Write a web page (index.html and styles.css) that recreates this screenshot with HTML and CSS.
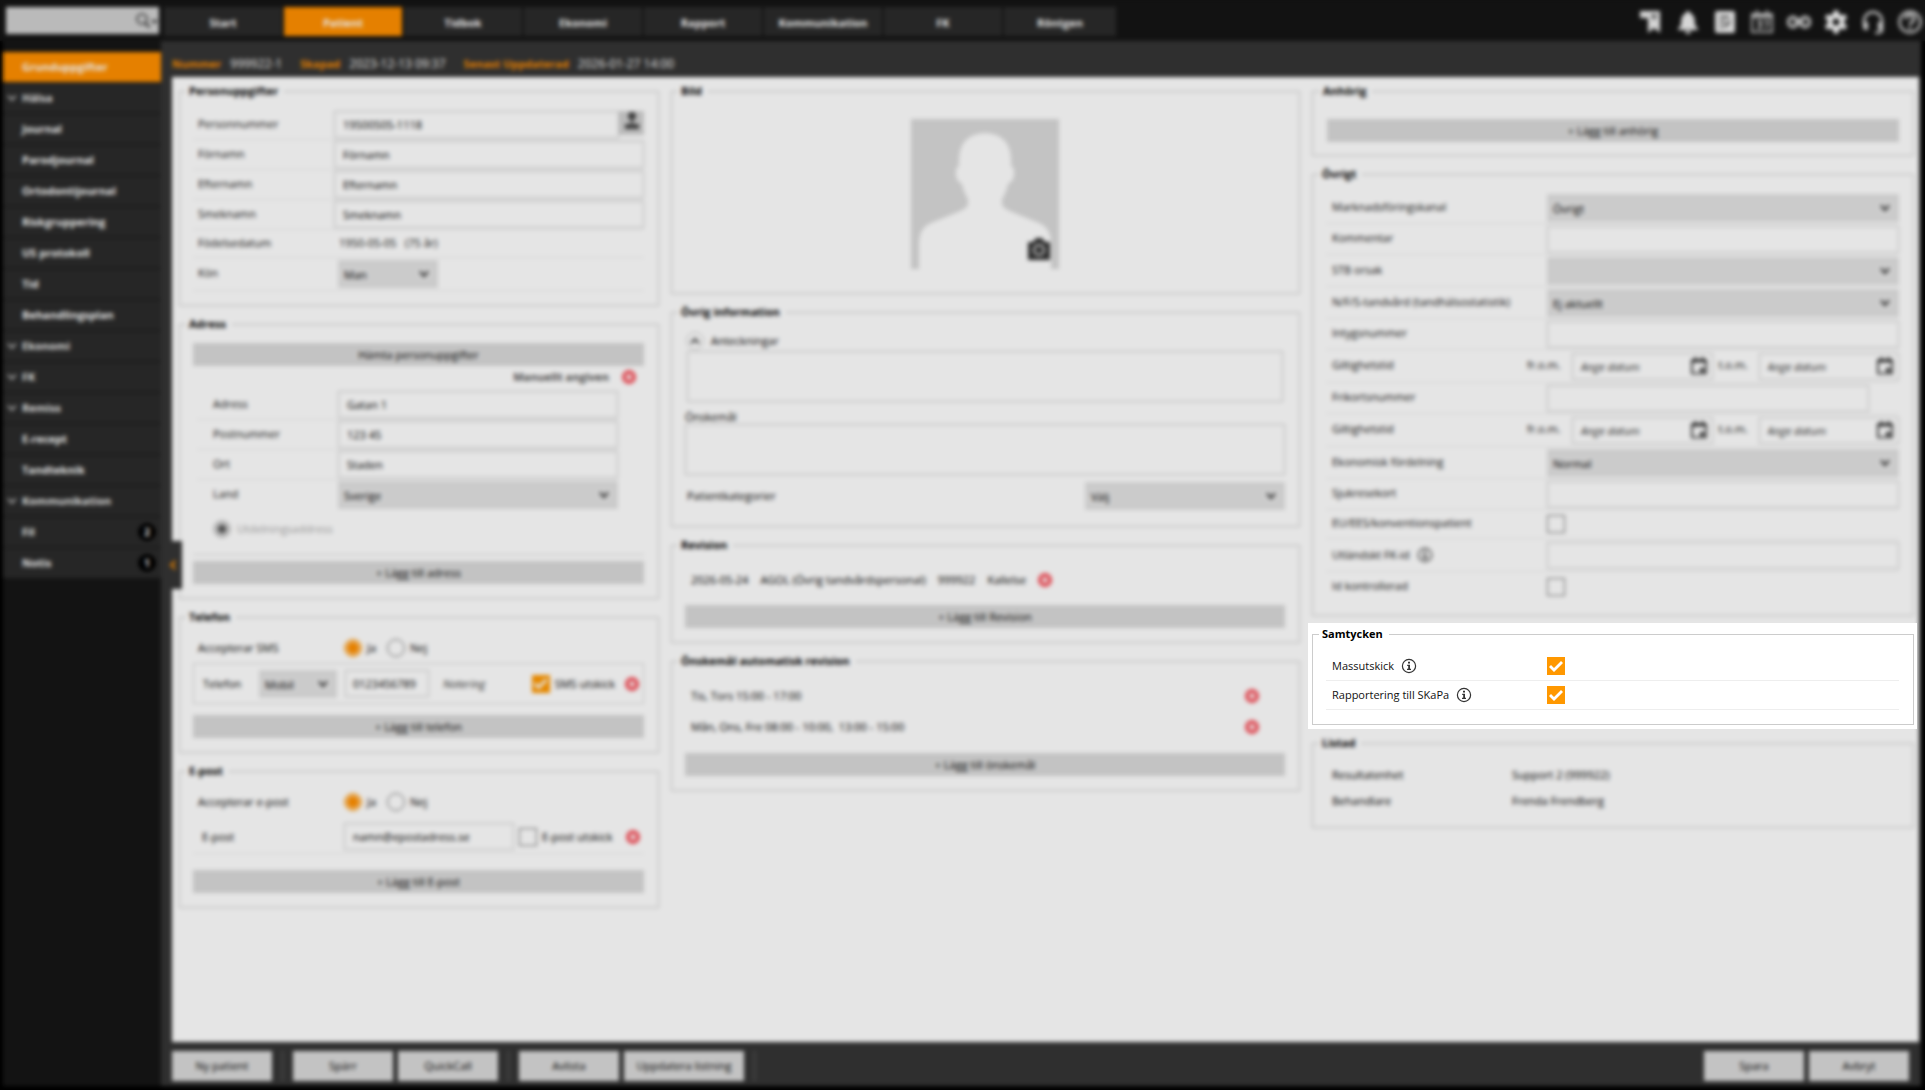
FILE: index.html
```html
<!DOCTYPE html>
<html lang="sv">
<head>
<meta charset="utf-8">
<title>Patient – Grunduppgifter</title>
<link rel="stylesheet" href="styles.css">
</head>
<body>
<svg class="defs" aria-hidden="true">
  <symbol id="chev" viewBox="0 0 10 8"><path d="M1 1.5 5 6 9 1.5" fill="none" stroke="currentColor" stroke-width="2"/></symbol>
  <symbol id="remove" viewBox="0 0 14 14"><circle cx="7" cy="7" r="7" fill="#f8525c"/><path d="M4.500 4.500 9.500 9.500M9.500 4.500 4.500 9.500" stroke="#fff" stroke-width="2.200"/></symbol>
  <symbol id="info" viewBox="0 0 16 16"><circle cx="8" cy="8" r="6.600" fill="none" stroke="#333" stroke-width="1.200"/><path d="M7 3.800h2v1.700H7zM6.200 6.800H9v4h1v1.200H6v-1.200h1.200V8h-1z" fill="#333"/></symbol>
  <symbol id="cal" viewBox="0 0 16 18"><path d="M1 3h14v13.500H1zM1 4.500h14M4.500 0v4M11.500 0v4" fill="none" stroke="#222" stroke-width="1.700"/><path d="M9 11h4v4H9z" fill="#222"/></symbol>
</svg>

<header class="topbar">
  <div class="search">
    <input type="search" aria-label="Sök patient">
    <svg width="24" height="16" viewBox="0 0 24 16"><circle cx="7" cy="6" r="5" fill="none" stroke="#333" stroke-width="1.500"/><path d="m10.500 10 4 4.500" stroke="#333" stroke-width="2"/><path d="M16 7h7l-3.500 4z" fill="#333"/></svg>
  </div>
  <nav class="tabs" aria-label="Moduler">
    <a href="#">Start</a><a href="#" class="active">Patient</a><a href="#">Tidbok</a><a href="#">Ekonomi</a><a href="#">Rapport</a><a href="#">Kommunikation</a><a href="#">FK</a><a href="#" class="narrow">Röntgen</a>
  </nav>
  <div class="tools">
    <button type="button" aria-label="Bokmärken"><svg viewBox="0 0 24 24"><path d="M1 1h20v22l-6-5-6 5V8H1z" fill="#eee"/><path d="M12 6h6M15 4v6" stroke="#555" stroke-width="2"/></svg></button>
    <button type="button" aria-label="Aviseringar"><svg viewBox="0 0 24 24"><path d="M12 1c2 0 2 2 2 2 4 2 5 5 5 12l3 4v1H2v-1l3-4C5 8 6 5 10 3c0 0 0-2 2-2zM9 21h6c0 4-6 4-6 0z" fill="#eee"/></svg></button>
    <button type="button" aria-label="Anteckning"><svg viewBox="0 0 24 24"><rect x="2" y="1" width="20" height="22" rx="2" fill="#eee"/><path d="M7 7h9M7 12h5M7 17h3M12 17l5-6" stroke="#444" stroke-width="2"/></svg></button>
    <button type="button" aria-label="Kalender"><svg viewBox="0 0 24 24"><path d="M2 4h20v18H2zM7 0v5M17 0v5" fill="none" stroke="#bbb" stroke-width="2"/><path d="M2 3h20v5H2z" fill="#bbb"/><path d="M7 11h4v3H8h3v4H7M14 11h4l-2 8" fill="none" stroke="#bbb" stroke-width="2"/></svg></button>
    <button type="button" aria-label="Länkar"><svg viewBox="0 0 28 24"><circle cx="7" cy="12" r="5.500" fill="none" stroke="#ccc" stroke-width="4"/><circle cx="21" cy="12" r="5.500" fill="none" stroke="#ccc" stroke-width="4"/><path d="M8 12h12" stroke="#ccc" stroke-width="3"/></svg></button>
    <button type="button" aria-label="Inställningar"><svg viewBox="0 0 24 24"><path d="M12 4.500v-4M12 19.500v4M5.500 8.200 2 6.200M18.500 15.800l3.500 2M5.500 15.800 2 17.800M18.500 8.200l3.500-2" stroke="#fff" stroke-width="5"/><circle cx="12" cy="12" r="6" fill="none" stroke="#fff" stroke-width="5"/></svg></button>
    <button type="button" aria-label="Support"><svg viewBox="0 0 24 24"><path d="M3 14v-3a9 9 0 0 1 18 0v9q0 3-7 3" fill="none" stroke="#ddd" stroke-width="2.500"/><path d="M2 12h5v8H5q-3 0-3-3zM17 12h5v8h-5z" fill="#ddd"/></svg></button>
    <button type="button" aria-label="Hjälp"><svg viewBox="0 0 24 24"><circle cx="12" cy="12" r="10.500" fill="none" stroke="#ccc" stroke-width="2.500"/><path d="M8 9q0-4 4-4t4 4q0 2-4 5v1M12 17v3" fill="none" stroke="#ccc" stroke-width="3"/></svg></button>
  </div>
</header>

<div class="shell">
  <nav class="sidebar" aria-label="Patientmeny">
    <a href="#" class="active">Grunduppgifter</a>
    <a href="#" class="group"><svg><use href="#chev"/></svg>Hälsa</a>
    <a href="#">Journal</a>
    <a href="#">Parodjournal</a>
    <a href="#">Ortodontijournal</a>
    <a href="#">Riskgruppering</a>
    <a href="#">US protokoll</a>
    <a href="#">Tid</a>
    <a href="#">Behandlingsplan</a>
    <a href="#" class="group"><svg><use href="#chev"/></svg>Ekonomi</a>
    <a href="#" class="group"><svg><use href="#chev"/></svg>FK</a>
    <a href="#" class="group"><svg><use href="#chev"/></svg>Remiss</a>
    <a href="#">E-recept</a>
    <a href="#">Tandteknik</a>
    <a href="#" class="group"><svg><use href="#chev"/></svg>Kommunikation</a>
    <a href="#">Fil <span class="count">2</span></a>
    <a href="#">Notis <span class="count">1</span></a>
  </nav>

  <div class="workspace">
    <div class="infobar"><b>Nummer</b><span>999922-1</span><b>Skapad</b><span>2023-12-13 09:37</span><b>Senast Uppdaterad</b><span>2026-01-27 14:00</span></div>

    <main class="panel">
      <button type="button" class="handle" aria-label="Fäll in menyn"><svg><use href="#chev"/></svg></button>

      <div class="column">
        <fieldset>
          <legend>Personuppgifter</legend>
          <div class="rows person">
            <div class="row"><label for="pnr">Personnummer</label><div class="join"><input id="pnr" type="text" value="19500505-1118"><button type="button" class="lookup" aria-label="Hämta person"><svg width="20" height="20" viewBox="0 0 20 20"><circle cx="10" cy="5" r="4" fill="#444"/><path d="M9 8h2v5h6v5H3v-5h6z" fill="#444"/></svg></button></div></div>
            <div class="row"><label for="fn">Förnamn</label><input id="fn" type="text" value="Förnamn"></div>
            <div class="row"><label for="en">Efternamn</label><input id="en" type="text" value="Efternamn"></div>
            <div class="row"><label for="sn">Smeknamn</label><input id="sn" type="text" value="Smeknamn"></div>
            <div class="row birth"><span>Födelsedatum</span><span class="indent">1950-05-05 &nbsp; (75 år)</span></div>
            <div class="row gender"><label for="kon">Kön</label><div class="select"><select id="kon"><option>Man</option></select><svg><use href="#chev"/></svg></div></div>
          </div>
        </fieldset>

        <fieldset>
          <legend>Adress</legend>
          <button type="button" class="wide">Hämta personuppgifter</button>
          <div class="manual"><b>Manuellt angiven</b><button type="button" class="remove" aria-label="Ta bort adress"><svg><use href="#remove"/></svg></button></div>
          <div class="rows address">
            <div class="row"><label for="adr">Adress</label><input id="adr" type="text" value="Gatan 1"></div>
            <div class="row"><label for="post">Postnummer</label><input id="post" type="text" value="123 45"></div>
            <div class="row"><label for="ort">Ort</label><input id="ort" type="text" value="Staden"></div>
            <div class="row"><label for="land">Land</label><div class="select"><select id="land"><option>Sverige</option></select><svg><use href="#chev"/></svg></div></div>
          </div>
          <label class="delivery"><input type="radio" name="delivery" checked disabled>Utdelningsaddress</label>
          <button type="button" class="wide">+ Lägg till adress</button>
        </fieldset>

        <fieldset>
          <legend>Telefon</legend>
          <div class="accept"><span>Accepterar SMS</span><label><input type="radio" name="sms" checked>Ja</label><label><input type="radio" name="sms">Nej</label></div>
          <div class="phone">
            <label for="tel">Telefon</label>
            <div class="select"><select aria-label="Telefontyp"><option>Mobil</option></select><svg><use href="#chev"/></svg></div>
            <input id="tel" type="tel" value="0123456789">
            <input class="note" type="text" placeholder="Notering" aria-label="Notering">
            <label class="tick"><input type="checkbox" checked>SMS utskick</label>
            <button type="button" class="remove" aria-label="Ta bort telefon"><svg><use href="#remove"/></svg></button>
          </div>
          <button type="button" class="wide">+ Lägg till telefon</button>
        </fieldset>

        <fieldset>
          <legend>E-post</legend>
          <div class="accept"><span>Accepterar e-post</span><label><input type="radio" name="mail" checked>Ja</label><label><input type="radio" name="mail">Nej</label></div>
          <div class="mail">
            <label for="epost">E-post</label>
            <input id="epost" type="email" value="namn@epostadress.se">
            <label class="tick"><input type="checkbox">E-post utskick</label>
            <button type="button" class="remove" aria-label="Ta bort e-post"><svg><use href="#remove"/></svg></button>
          </div>
          <button type="button" class="wide">+ Lägg till E-post</button>
        </fieldset>
      </div>

      <div class="column">
        <fieldset>
          <legend>Bild</legend>
          <div class="photo">
            <svg width="148" height="150" viewBox="0 0 148 150"><path d="M0 0h148v150H0z" fill="#dadada"/><path d="M8 150v-25q0-16 12-21l27-11q10-4 10-8V80q-4-6-6-15-7-4-6-12 0-5 3-6-2-32 26-33 28 1 26 33 3 1 3 6 1 8-6 12-2 9-6 15v5q0 4 10 8l27 11q12 5 12 21v25z" fill="#fff"/></svg>
            <button type="button" class="camera" aria-label="Ta bild"><svg width="22" height="22" viewBox="0 0 22 22"><path d="M0 4h5l3-4h6l3 4h5v18H0z" fill="#333"/><circle cx="11" cy="12" r="5" fill="none" stroke="#ddd" stroke-width="2"/></svg></button>
          </div>
        </fieldset>

        <fieldset>
          <legend>Övrig information</legend>
          <div class="notes-head"><button type="button" aria-label="Fäll ihop"><svg><use href="#chev"/></svg></button><label for="ant">Anteckningar</label></div>
          <textarea id="ant" class="inset"></textarea>
          <label class="above" for="onsk">Önskemål</label>
          <textarea id="onsk"></textarea>
          <div class="category"><label for="kat">Patientkategorier</label><div class="select"><select id="kat"><option>Välj</option></select><svg><use href="#chev"/></svg></div></div>
        </fieldset>

        <fieldset>
          <legend>Revision</legend>
          <div class="entry first"><span>2026-05-24</span><span>AGOL (Övrig tandvårdspersonal)</span><span>999922</span><span>Kallelse</span><button type="button" class="remove" aria-label="Ta bort revision"><svg><use href="#remove"/></svg></button></div>
          <button type="button" class="wide">+ Lägg till Revision</button>
        </fieldset>

        <fieldset>
          <legend>Önskemål automatisk revision</legend>
          <div class="entry spread"><span>Tis, Tors 15:00 - 17:00</span><button type="button" class="remove" aria-label="Ta bort önskemål"><svg><use href="#remove"/></svg></button></div>
          <div class="entry spread"><span>Mån, Ons, Fre 08:00 - 10:00, &nbsp;13:00 - 15:00</span><button type="button" class="remove" aria-label="Ta bort önskemål"><svg><use href="#remove"/></svg></button></div>
          <button type="button" class="wide">+ Lägg till önskemål</button>
        </fieldset>
      </div>

      <div class="column">
        <fieldset class="relative-box">
          <legend>Anhörig</legend>
          <button type="button" class="wide">+ Lägg till anhörig</button>
        </fieldset>

        <fieldset class="other-box">
          <legend>Övrigt</legend>
          <div class="rows other">
            <div class="row pick"><label for="kanal">Marknadsföringskanal</label><div class="select"><select id="kanal"><option>Övrigt</option></select><svg><use href="#chev"/></svg></div></div>
            <div class="row"><label for="komm">Kommentar</label><input id="komm" type="text"></div>
            <div class="row pick"><label for="stb">STB orsak</label><div class="select"><select id="stb"><option></option></select><svg><use href="#chev"/></svg></div></div>
            <div class="row pick"><label for="nfs">N/F/S-tandvård (tandhälsostatistik)</label><div class="select"><select id="nfs"><option>Ej aktuellt</option></select><svg><use href="#chev"/></svg></div></div>
            <div class="row"><label for="intyg">Intygsnummer</label><input id="intyg" type="text"></div>
            <div class="row dates"><span>Giltighetstid</span><label for="d1">fr.o.m.</label><div class="date"><input id="d1" type="text" placeholder="Ange datum"><svg><use href="#cal"/></svg></div><label for="d2">t.o.m.</label><div class="date"><input id="d2" type="text" placeholder="Ange datum"><svg><use href="#cal"/></svg></div></div>
            <div class="row short"><label for="fri">Frikortsnummer</label><input id="fri" type="text"></div>
            <div class="row dates"><span>Giltighetstid</span><label for="d3">fr.o.m.</label><div class="date"><input id="d3" type="text" placeholder="Ange datum"><svg><use href="#cal"/></svg></div><label for="d4">t.o.m.</label><div class="date"><input id="d4" type="text" placeholder="Ange datum"><svg><use href="#cal"/></svg></div></div>
            <div class="row pick"><label for="eko">Ekonomisk fördelning</label><div class="select"><select id="eko"><option>Normal</option></select><svg><use href="#chev"/></svg></div></div>
            <div class="row"><label for="sjuk">Sjukresekort</label><input id="sjuk" type="text"></div>
            <div class="row check"><label for="eu">EU/EES/konventionspatient</label><input id="eu" type="checkbox"></div>
            <div class="row foreign"><label for="fkid">Utländskt FK-id <svg><use href="#info"/></svg></label><input id="fkid" type="text"></div>
            <div class="row check"><label for="idk">Id kontrollerad</label><input id="idk" type="checkbox"></div>
          </div>
        </fieldset>

        <div class="spotlight">
          <fieldset>
            <legend>Samtycken</legend>
            <div class="rows consent">
              <div class="row"><label for="mass">Massutskick <svg><use href="#info"/></svg></label><input id="mass" type="checkbox" checked></div>
              <div class="row"><label for="skapa">Rapportering till SKaPa <svg><use href="#info"/></svg></label><input id="skapa" type="checkbox" checked></div>
            </div>
          </fieldset>
        </div>

        <fieldset>
          <legend>Listad</legend>
          <dl class="listed"><dt>Resultatenhet</dt><dd>Support 2 (999922)</dd><dt>Behandlare</dt><dd>Frenda Frendberg</dd></dl>
        </fieldset>
      </div>
    </main>

    <footer class="actions">
      <button type="button">Ny patient</button><i></i>
      <button type="button">Spärr</button><button type="button">QuickCall</button><i></i>
      <button type="button">Avlista</button><button type="button" class="long">Uppdatera listning</button><i></i>
      <div class="confirm"><button type="button">Spara</button><button type="button">Avbryt</button></div>
    </footer>
  </div>
</div>
<div class="dimmer"></div>
</body>
</html>
```

FILE: styles.css
```css
* { box-sizing: border-box; }
body {
  margin: 0;
  min-height: 100vh;
  display: flex;
  flex-direction: column;
  background: #151515;
  color: #000;
  font: 11px/16px "Open Sans", "Noto Sans", sans-serif;
}
a { color: inherit; text-decoration: none; }
button, input, select, textarea { font: inherit; color: inherit; margin: 0; }
button { padding: 0; border: 0; background: none; }
svg { display: block; flex: none; }
.defs { position: absolute; width: 0; height: 0; }

/* Blurs and darkens everything except the highlighted section */
.dimmer {
  position: fixed;
  inset: 0;
  z-index: 5;
  pointer-events: none;
  background: rgba(0, 0, 0, .1);
  backdrop-filter: blur(2px);
}

.topbar { display: flex; height: 41px; padding: 7px 3px 0 6px; }
.search {
  display: flex;
  align-items: center;
  width: 153px;
  height: 27px;
  margin-right: 5px;
  background: #d0d0d0;
}
.search input { flex: 1; min-width: 0; height: 100%; border: 0; background: none; }
.tabs { display: flex; gap: 2px; }
.tabs a {
  width: 118px;
  height: 29px;
  background: #2b2b2b;
  color: #fff;
  font-weight: 700;
  line-height: 31px;
  text-align: center;
}
.tabs .narrow { width: 112px; }
.tabs .active, .sidebar .active { background: #ff8f00; }
.tools { display: flex; align-items: flex-start; gap: 13px; margin-left: auto; padding-top: 3px; }
.tools svg { width: 24px; height: 24px; }

.shell { display: flex; flex: 1; padding: 0 4px 4px 3px; background: #000; }
.sidebar { width: 158px; padding-top: 11px; background: #161616; }
.sidebar a {
  display: flex;
  align-items: center;
  height: 31px;
  padding: 0 5px 0 19px;
  border-bottom: 1px solid #161616;
  background: #2b2b2b;
  color: #fff;
  font-weight: 700;
}
.sidebar .group { padding-left: 4px; gap: 5px; color: #eee; }
.sidebar svg { width: 10px; height: 8px; color: #aaa; }
.count {
  width: 18px;
  height: 18px;
  margin-left: auto;
  border-radius: 9px;
  background: #000;
  font-size: 10px;
  line-height: 18px;
  text-align: center;
}

.workspace { display: flex; flex: 1; flex-direction: column; padding-left: 11px; background: #353535; }
.infobar {
  display: flex;
  align-items: center;
  height: 36px;
  padding-top: 10px;
  color: #fff;
}
.infobar b { color: #ff8f00; margin-right: 9px; }
.infobar span { margin-right: 18px; font-size: 12px; }

.panel {
  position: relative;
  display: grid;
  grid-template-columns: 480fr 629fr 602fr;
  align-items: start;
  gap: 12px;
  flex: 1;
  margin-right: 2px;
  padding: 5px 5px 20px 7px;
  background: #fff;
}
.handle {
  position: absolute;
  left: 0;
  top: 464px;
  width: 10px;
  height: 48px;
  background: #353535;
}
.handle svg { width: 10px; height: 8px; color: #ff8f00; transform: translateX(-4px) rotate(90deg); }

.column { display: flex; flex-direction: column; gap: 9px; min-width: 0; }
fieldset {
  min-width: 0;
  margin: 0;
  padding: 10px 14px 14px 13px;
  border: 1px solid #ccc;
}
legend { height: 18px; margin-left: -7px; padding: 0 6px 0 3px; font-weight: 700; line-height: 18px; }
.wide { display: block; width: 100%; height: 23px; background: #dadada; }

input, textarea { border: 1px solid #ccc; background: #fff; padding: 2px 8px; min-width: 0; }
input { height: 27px; }
textarea { display: block; width: 100%; height: 51px; resize: none; }
textarea.inset { width: calc(100% - 4px); margin-left: 2px; }
::placeholder { color: #333; font-style: italic; opacity: 1; }
input[type="checkbox"], input[type="radio"] {
  appearance: none;
  flex: none;
  width: 18px;
  height: 18px;
  padding: 0;
  border: 1px solid #777;
}
input[type="radio"] { border-radius: 9px; }
input[type="radio"]:checked { border: 1px solid #ff9800; background: radial-gradient(circle, #ff8f00 5px, #ffc880 6px); }
input[type="radio"]:disabled { border-color: #ccc; background: radial-gradient(circle, #555 3px, #ccc 5px); }
input[type="checkbox"]:checked { border: 0; background: #ff9800; }
input[type="checkbox"]:checked::before {
  content: "";
  display: block;
  height: 18px;
  background: #fff;
  clip-path: polygon(2px 10px, 4px 8px, 7px 11px, 14px 4px, 16px 6px, 7px 15px);
}
.select { position: relative; display: flex; align-items: center; height: 28px; background: #e3e3e3; }
.select select { appearance: none; width: 100%; height: 100%; padding: 2px 6px 0; border: 0; background: none; }
.select svg { position: absolute; right: 9px; width: 10px; height: 8px; color: #333; pointer-events: none; }
.remove svg { width: 14px; height: 14px; }

.row {
  display: grid;
  grid-template-columns: 140px 1fr;
  align-items: center;
  height: 30px;
  padding-left: 5px;
  border-bottom: 1px solid #eee;
}
.row label, .row > span { color: #111; padding-bottom: 2px; }
.person .row { grid-template-columns: 136px 1fr; }
.join { display: flex; }
.join input { flex: 1; }
.lookup { display: flex; justify-content: center; width: 25px; height: 24px; background: #d0d0d0; }
.person .birth { height: 28px; }
.person .gender { height: 33px; }
.gender .select { width: 100px; margin-left: 4px; }
.row .indent { padding-left: 5px; }

.manual { display: flex; align-items: center; justify-content: flex-end; gap: 13px; height: 24px; padding: 0 8px 2px 0; color: #555; }
.address { padding: 0 26px 0 4px; }
.address .row { grid-template-columns: 125px 1fr; padding-left: 16px; }
.address .row:last-child { border: 0; }
.delivery {
  display: flex;
  align-items: center;
  gap: 6px;
  height: 45px;
  margin-bottom: 6px;
  padding: 0 0 6px 20px;
  border-bottom: 1px solid #ddd;
  color: #aaa;
}

.accept { display: flex; align-items: center; height: 24px; padding-left: 5px; }
.accept span { width: 146px; }
.accept label { display: flex; align-items: center; gap: 5px; margin-right: 11px; }
.phone {
  display: flex;
  align-items: center;
  gap: 8px;
  height: 41px;
  margin: 3px 0 11px;
  padding: 0 4px 0 9px;
  border: 1px solid #ddd;
}
.phone > label:first-child { width: 48px; }
.phone .select { width: 78px; }
.phone #tel { width: 84px; padding: 2px 7px; }
.phone .note { flex: 1; border: 0; padding: 2px 6px; }
.tick { display: flex; align-items: center; gap: 5px; white-space: nowrap; }
.phone .tick { margin-right: 2px; }
.mail {
  display: flex;
  align-items: center;
  gap: 5px;
  height: 34px;
  margin: 6px 0 16px;
  padding: 0 4px 0 9px;
  border-bottom: 1px solid #eee;
}
.mail > label:first-child { width: 137px; }
.mail #epost { width: 170px; }
.mail .remove { margin-left: auto; }

.photo { position: relative; width: 148px; margin: 9px auto 10px; }
.camera { position: absolute; right: 9px; bottom: 9px; }
.notes-head { display: flex; align-items: center; gap: 7px; height: 20px; padding-left: 1px; }
.notes-head button { display: grid; place-content: center; width: 18px; height: 18px; border: 1px solid #ccc; border-radius: 9px; }
.notes-head svg { width: 10px; height: 8px; color: #444; transform: rotate(180deg); }
.above { display: block; height: 22px; line-height: 30px; }
.category { display: flex; align-items: center; justify-content: space-between; margin: 7px 0 2px; padding-left: 2px; }
.category .select { width: 200px; }
.entry { display: flex; align-items: center; gap: 12px; height: 31px; padding: 0 26px 0 6px; }
.entry.first { margin-bottom: 10px; }
.entry.spread { justify-content: space-between; }
.entry + .entry { margin-bottom: 11px; }

.relative-box { padding: 19px 14px 13px 14px; }
.other-box { padding-top: 9px; }
.other .row, .consent .row { grid-template-columns: 215px 1fr; height: 31px; padding-left: 6px; }
.other .pick { height: 32px; }
.other .dates { grid-template-columns: 195px 45px 1fr 46px 1fr; height: 33px; }
.other .dates label:nth-of-type(2) { padding-left: 6px; }
.other .short { padding-right: 30px; }
.other .check { height: 29px; }
.other .foreign { height: 33px; }
.other .row:last-child { border: 0; }
.row label:has(svg) { display: flex; align-items: center; gap: 7px; padding-bottom: 0; }
.row label svg { width: 16px; height: 16px; }
.date { position: relative; display: flex; align-items: center; }
.date input { width: 100%; }
.date svg { position: absolute; right: 6px; width: 16px; height: 18px; pointer-events: none; }
.spotlight {
  position: relative;
  z-index: 10;
  margin: -2px -3px -4px -4px;
  padding: 2px 3px 4px 4px;
  background: #fff;
}
.spotlight fieldset { padding: 9px 14px 14px 13px; }
.consent .row { height: 29px; }
.listed { display: grid; grid-template-columns: 180px 1fr; row-gap: 10px; margin: 5px 0 4px; padding-left: 6px; }
.listed dd { margin: 0; }

.actions { display: flex; gap: 5px; height: 44px; padding: 9px 12px 5px 0; }
.actions button { width: 100px; height: 30px; background: #dadada; }
.actions .long { width: 120px; }
.actions i { width: 1px; height: 30px; margin: 0 5px; background: #666; }
.confirm { display: flex; gap: 5px; margin-left: auto; }
```
